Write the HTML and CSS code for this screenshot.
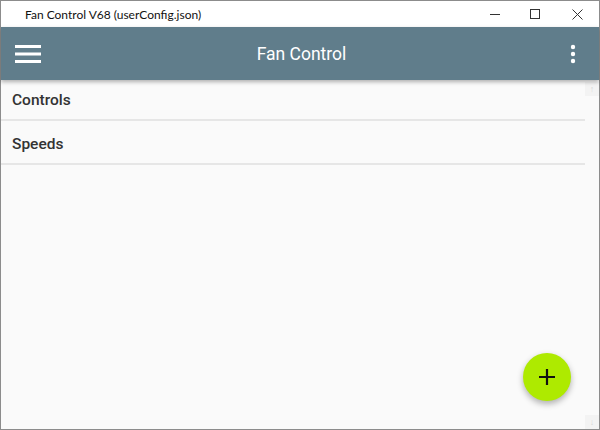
FILE: index.html
```html
<!DOCTYPE html>
<html lang="en">

<head>
    <meta charset="UTF-8">
    <meta name="viewport" content="width=device-width, initial-scale=1.0">
    <title>Fan Control V68 (userConfig.json)</title>
    <link rel="stylesheet" href="styles.css">
</head>

<body>
    <div class="window">
        <div class="titleBar">
            <span class="titleText">Fan Control V68 (userConfig.json)</span>
            <div class="winBtns">
                <span class="winBtn">
                    <svg width="10" height="10" viewBox="0 0 10 10"><path d="M0 5.5h10" stroke="#333" stroke-width="1"/></svg>
                </span>
                <span class="winBtn">
                    <svg width="10" height="10" viewBox="0 0 10 10"><rect x="0.5" y="0.5" width="9" height="9" fill="none" stroke="#333" stroke-width="1"/></svg>
                </span>
                <span class="winBtn">
                    <svg width="11" height="11" viewBox="0 0 11 11"><path d="M0.5 0.5l10 10M10.5 0.5l-10 10" stroke="#333" stroke-width="1"/></svg>
                </span>
            </div>
        </div>

        <div class="appBar">
            <a class="iconBtn menuBtn">
                <svg width="26" height="18" viewBox="0 0 26 18"><path d="M0 1.5h26M0 9h26M0 16.5h26" stroke="#fff" stroke-width="3"/></svg>
            </a>
            <div class="appTitle">Fan Control</div>
            <a class="iconBtn moreBtn">
                <svg width="6" height="20" viewBox="0 0 6 20"><circle cx="3" cy="3" r="2.2" fill="#fff"/><circle cx="3" cy="10" r="2.2" fill="#fff"/><circle cx="3" cy="17" r="2.2" fill="#fff"/></svg>
            </a>
        </div>

        <div class="main">
            <div class="list">
                <div class="item">Controls</div>
                <div class="item">Speeds</div>
            </div>
            <div class="scroll">
                <span class="arrow">&#8593;</span>
                <span class="arrow">&#8595;</span>
            </div>
            <a class="fab">
                <svg width="16" height="16" viewBox="0 0 16 16"><path d="M8 0v16M0 8h16" stroke="#111" stroke-width="2.2"/></svg>
            </a>
        </div>
    </div>
</body>

</html>
```

FILE: styles.css
```css
html,
body {
    margin: 0;
    width: 100%;
    height: 100%;
    overflow: hidden;
}

body {
    background-color: #fafafa;
    font-family: Roboto, "Noto Sans", sans-serif;
}

.window {
    box-sizing: border-box;
    width: 600px;
    height: 430px;
    border: 1px solid #8c8c8c;
    display: flex;
    flex-direction: column;
    background-color: #fafafa;
}

.titleBar {
    height: 26px;
    flex-shrink: 0;
    background-color: #fff;
    display: flex;
    align-items: center;
}

.titleText {
    margin-left: 24px;
    font-family: Lato, "Noto Sans", sans-serif;
    font-size: 12px;
    color: #111;
}

.winBtns {
    margin-left: auto;
    display: flex;
    height: 100%;
}

.winBtn {
    width: 40px;
    display: flex;
    align-items: center;
    justify-content: center;
}

.winBtn:last-child {
    width: 44px;
}

.appBar {
    position: relative;
    z-index: 2;
    height: 53px;
    flex-shrink: 0;
    background-color: #607d8b;
    display: flex;
    align-items: center;
    box-shadow: 0 2px 4px rgba(0, 0, 0, 0.3);
}

.iconBtn {
    display: flex;
    align-items: center;
    justify-content: center;
    cursor: pointer;
}

.menuBtn {
    margin-left: 14px;
    width: 26px;
}

.appTitle {
    flex: 1;
    text-align: center;
    color: #fff;
    font-size: 17.5px;
    margin-left: -8px;
}

.moreBtn {
    width: 6px;
    margin-right: 23px;
}

.main {
    position: relative;
    flex: 1;
    display: flex;
    margin-top: -3px;
}

.list {
    flex: 1;
}

.item {
    height: 38px;
    line-height: 38px;
    padding-top: 4px;
    padding-left: 11px;
    border-bottom: 2px solid #e6e6e6;
    font-size: 15.5px;
    font-weight: 500;
    color: #333;
}

.scroll {
    width: 14px;
    display: flex;
    flex-direction: column;
    justify-content: space-between;
    padding-top: 5px;
}

.arrow {
    display: block;
    height: 14px;
    line-height: 14px;
    text-align: center;
    font-size: 9px;
    color: #d8d8d8;
    background-color: #f3f3f3;
}

.fab {
    position: absolute;
    right: 28px;
    bottom: 28px;
    width: 48px;
    height: 48px;
    border-radius: 50%;
    background-color: #aeea00;
    display: flex;
    align-items: center;
    justify-content: center;
    box-shadow: 0 3px 6px rgba(0, 0, 0, 0.3);
    cursor: pointer;
}
```
